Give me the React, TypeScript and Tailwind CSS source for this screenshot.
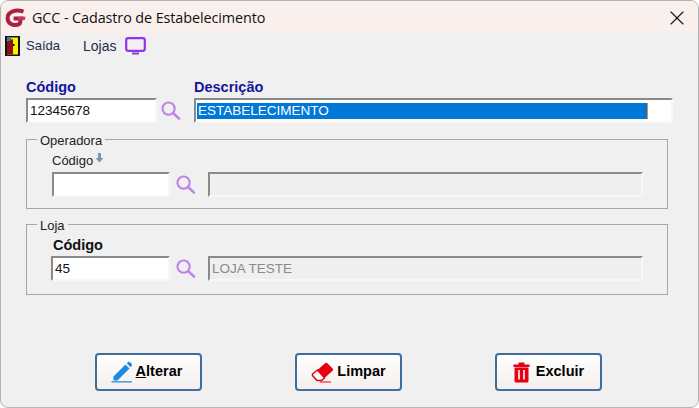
import React from "react";
import { X } from "lucide-react";

const SearchIcon: React.FC = () => (
  <svg width="21" height="21" viewBox="0 0 22 22" fill="none" stroke="#bf82ea" className="shrink-0">
    <circle cx="9" cy="9" r="6.4" strokeWidth="2.2" />
    <path d="M13.6 13.6 L20 19.6" strokeWidth="2.6" strokeLinecap="round" />
  </svg>
);

const Field: React.FC<{ className: string; value?: string; muted?: boolean }> = ({ className, value, muted }) => (
  <div
    className={`h-[25px] shrink-0 flex items-center pl-[2px] border-2 border-t-[#8a8a8a] border-l-[#8a8a8a] border-r-[#f7f7f7] border-b-[#f7f7f7] text-[13.5px] leading-none ${
      muted ? "bg-[#efefef] text-[#8a8a8a]" : "bg-white text-[#111]"
    } ${className}`}
  >
    {value}
  </div>
);

const ActionButton: React.FC<{ icon: React.ReactNode; children: React.ReactNode }> = ({ icon, children }) => (
  <button className="w-[107px] h-[38px] flex items-center justify-center gap-[3px] rounded-[4px] border-2 border-[#3f6d9c] bg-gradient-to-b from-white to-[#f3efec] text-[14.5px] font-bold text-black">
    {icon}
    {children}
  </button>
);

export default function App() {
  return (
    <div className="w-[699px] h-[408px] overflow-hidden bg-white font-['Liberation_Sans',sans-serif]">
      <div className="h-full flex flex-col bg-[#f0f0f0] border border-[#b5b5b5] rounded-[8px] overflow-hidden">
        {/* Title bar */}
        <div className="h-[33px] shrink-0 flex items-center bg-[#f9f0ed] pl-[4px] pr-[9px]">
          <svg width="21" height="20" viewBox="0 0 21 20" fill="none" className="shrink-0">
            <path
              d="M18.5 3.6 C11 0.8 2.6 3.4 2.6 10 C2.6 16.4 10 18.8 14.8 15.6 L16 10.6 L8.6 10.6"
              stroke="#ab1f40"
              strokeWidth="4"
            />
            <path d="M13 8.8 H20.5 L19.8 12 H13 Z" fill="#c23a58" />
          </svg>
          <span className="ml-[6px] text-[14.4px] text-[#111] font-['Open_Sans',sans-serif] tracking-[-0.1px]">
            GCC - Cadastro de Estabelecimento
          </span>
          <X className="ml-auto w-[24px] h-[24px] text-[#111]" strokeWidth={1.1} />
        </div>

        {/* Menu */}
        <div className="h-[24px] shrink-0 flex items-center pl-[4px] text-[13px] text-[#2a2a4a]">
          <svg width="15" height="20" viewBox="0 0 15 20" className="shrink-0">
            <rect x="0" y="0" width="15" height="20" fill="#141414" />
            <rect x="2" y="1.5" width="11" height="17" fill="#fff200" />
            <path d="M2 5 L8 3 V18.5 H2 Z" fill="#8a1414" />
            <rect x="2" y="1.5" width="4" height="3" fill="#2a7fc0" />
            <rect x="8" y="8" width="1.6" height="2" fill="#141414" />
          </svg>
          <span className="ml-[6px]">Saída</span>
          <span className="ml-[23px] text-[14px]">Lojas</span>
          <svg width="21" height="18" viewBox="0 0 21 18" fill="none" className="ml-[9px] shrink-0">
            <rect x="1.2" y="1.2" width="18.6" height="12.6" rx="2" stroke="#9333ea" strokeWidth="2.2" />
            <path d="M7 16.5 H14" stroke="#9333ea" strokeWidth="2" />
          </svg>
        </div>

        {/* Form */}
        <div className="flex-1 flex flex-col px-[25px] pt-[19px]">
          <div className="flex items-start">
            <div className="w-[168px]">
              <div className="text-[14.5px] leading-[21px] font-bold text-[#15159a]">Código</div>
              <div className="flex items-center gap-[3px] h-[25px]">
                <Field className="w-[131px]" value="12345678" />
                <SearchIcon />
              </div>
            </div>
            <div className="flex-1">
              <div className="text-[14.5px] leading-[21px] font-bold text-[#15159a]">Descrição</div>
              <div className="h-[25px] w-[479px] flex items-center pl-[1px] pr-[23px] border-2 border-t-[#8a8a8a] border-l-[#8a8a8a] border-r-[#f7f7f7] border-b-[#f7f7f7] bg-white">
                <div className="w-full h-[16px] flex items-center pl-[1px] bg-[#0078d7] border-r border-[#e8873a] text-[13.5px] leading-none text-white">
                  ESTABELECIMENTO
                </div>
              </div>
            </div>
          </div>

          <fieldset className="mt-[7px] w-[642px] h-[79px] border border-[#a6a6a6] pl-[25px] min-w-0">
            <legend className="ml-[-15px] px-[3px] pt-[4px] text-[13px] leading-[14px] text-[#222]">Operadora</legend>
            <div className="text-[13px] leading-[15px] flex items-start text-[#222] mt-[5px]">
              Código
              <svg width="9" height="10" viewBox="0 0 9 10" className="ml-[2px]">
                <path d="M3 0 H6 V5 H8.5 L4.5 9.5 L0.5 5 H3 Z" fill="#7f93b8" />
              </svg>
            </div>
            <div className="flex items-center mt-[4px]">
              <Field className="w-[118px]" />
              <div className="ml-[5px] mr-[12px] flex">
                <SearchIcon />
              </div>
              <Field className="w-[435px]" muted />
            </div>
          </fieldset>

          <fieldset className="mt-[6px] w-[642px] h-[80px] border border-[#a6a6a6] pl-[24px] min-w-0">
            <legend className="ml-[-14px] px-[3px] pt-[4px] text-[13px] leading-[14px] text-[#222]">Loja</legend>
            <div className="pl-[2px] text-[14.5px] leading-[16px] font-bold text-[#111] mt-[4px]">Código</div>
            <div className="flex items-center mt-[3px]">
              <Field className="w-[119px]" value="45" />
              <div className="ml-[5px] mr-[12px] flex">
                <SearchIcon />
              </div>
              <Field className="w-[435px]" value="LOJA TESTE" muted />
            </div>
          </fieldset>

          {/* Actions */}
          <div className="mt-[58px] pl-[69px] flex gap-[93px]">
            <ActionButton
              icon={
                <svg width="22" height="22" viewBox="0 0 22 22" className="shrink-0">
                  <path d="M2.5 15.5 L14.5 3.5 L18.5 7.5 L6.5 19.5 L2.5 19.5 Z" fill="#1e88e5" />
                  <path d="M15.8 2.2 L17 1 Q18 0.4 19 1.2 L20.6 2.8 Q21.4 4 20.6 5 L19.6 6.2 Z" fill="#1e88e5" />
                  <path d="M0.5 20.8 H21" stroke="#1e88e5" strokeWidth="1.2" />
                </svg>
              }
            >
              <span className="mr-[4px]">
                <span className="underline">A</span>lterar
              </span>
            </ActionButton>
            <ActionButton
              icon={
                <svg width="23" height="21" viewBox="0 0 23 21" className="shrink-0">
                  <path d="M6.5 8 L14 1.2 Q15.2 0.4 16.4 1.2 L21.6 6.4 Q22.6 7.6 21.6 8.8 L13.5 16 Z" fill="#e60012" />
                  <path d="M6.5 8 L13.5 16 L10.5 18.5 H6 L1.5 13.5 Q1 12.6 1.6 12 Z" fill="#fff" stroke="#e60012" strokeWidth="1.5" />
                  <path d="M9 20 H20" stroke="#e60012" strokeWidth="1" />
                </svg>
              }
            >
              Limpar
            </ActionButton>
            <ActionButton
              icon={
                <svg width="17" height="21" viewBox="0 0 17 21" className="shrink-0 mr-[3px]">
                  <path d="M5.5 0.5 H11.5 V2.5 H16.5 V5 H0.5 V2.5 H5.5 Z" fill="#e60012" />
                  <path d="M1.5 5.5 H15.5 V19 Q15.5 20.5 14 20.5 H3 Q1.5 20.5 1.5 19 Z" fill="#e60012" />
                  <path d="M6 8 V17.5 M11 8 V17.5" stroke="#fff" strokeWidth="1.6" />
                </svg>
              }
            >
              Excluir
            </ActionButton>
          </div>
        </div>
      </div>
    </div>
  );
}
